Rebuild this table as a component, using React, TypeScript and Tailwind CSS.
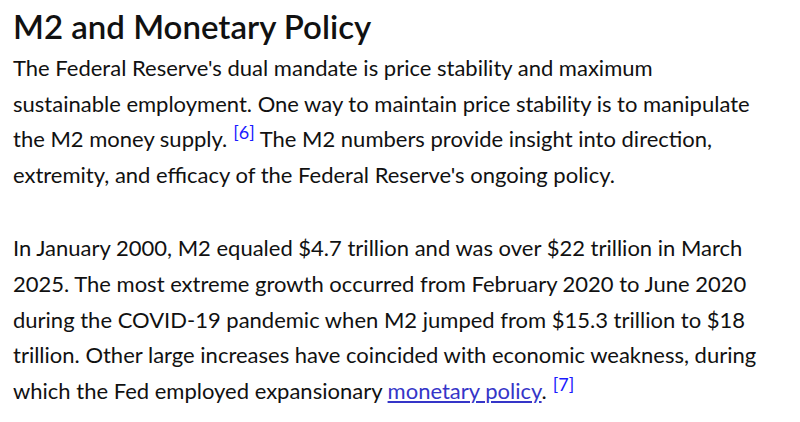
const App = () => {
  return (
    <div className="min-h-screen bg-white pl-[13px] pr-[38px] pt-[4px] font-['Lato',_'Noto_Sans',_sans-serif] text-[#111]">
      <h1 className="text-[33px] font-semibold leading-[44px]">M2 and Monetary Policy</h1>
      <p className="mt-[2px] text-[22px] leading-[35.6px]">
        The Federal Reserve's dual mandate is price stability and maximum sustainable employment. One way to
        maintain price stability is to manipulate the M2 money supply.
        <sup className="ml-[6px] -top-[0.45em] text-[18px] text-[#1b1bff]">[6]</sup> The M2 numbers provide
        insight into direction, extremity, and efficacy of the Federal Reserve's ongoing policy.
      </p>
      <p className="mt-[38px] text-[22px] leading-[35.6px]">
        In January 2000, M2 equaled $4.7 trillion and was over $22 trillion in March 2025. The most extreme
        growth occurred from February 2020 to June 2020 during the COVID-19 pandemic when M2 jumped from $15.3
        trillion to $18 trillion. Other large increases have coincided with economic weakness, during which the
        Fed employed expansionary{' '}
        <a href="#" className="text-[#3535c8] underline underline-offset-[2px]">
          monetary policy
        </a>
        .<sup className="ml-[6px] -top-[0.45em] text-[18px] text-[#1b1bff]">[7]</sup>
      </p>
    </div>
  );
};

export default App;
